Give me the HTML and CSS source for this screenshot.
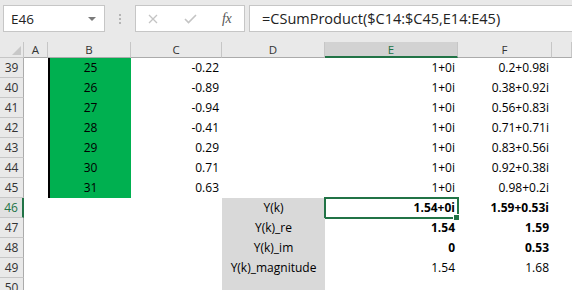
FILE: index.html
```html
<!DOCTYPE html>
<html lang="en">
<head>
    <meta charset="UTF-8">
    <title>Sheet - SumProduct</title>
    <link rel="stylesheet" href="styles.css">
</head>
<body>
    <div class="toolbar">
        <div class="namebox">
            <span>E46</span>
            <svg class="caret" width="8" height="5" viewBox="0 0 8 5"><path d="M0 0 H8 L4 4 Z" fill="#7a7a7a"/></svg>
        </div>
        <div class="grip"><i></i><i></i><i></i></div>
        <div class="fxbox">
            <svg width="10" height="10" viewBox="0 0 10 10"><path d="M1 1 L9 9 M9 1 L1 9" stroke="#c4c4c4" stroke-width="1.3" fill="none"/></svg>
            <svg width="13" height="10" viewBox="0 0 13 10"><path d="M1 5 L4.5 8.5 L12 1" stroke="#c4c4c4" stroke-width="1.6" fill="none"/></svg>
            <span class="fx">fx</span>
        </div>
        <div class="formula">=CSumProduct($C14:$C45,E14:E45)</div>
    </div>

    <div class="sheet">
        <!-- column headers -->
        <div class="corner"><svg width="9" height="9" viewBox="0 0 9 9"><path d="M9 0 V9 H0 Z" fill="#c8c8c8"/></svg></div>
        <div class="colhdr">A</div>
        <div class="colhdr">B</div>
        <div class="colhdr">C</div>
        <div class="colhdr">D</div>
        <div class="colhdr active">E</div>
        <div class="colhdr">F</div>
        <div class="colhdr"></div>

        <div class="rowhdr">39</div><div class="cell"></div><div class="cell green">25</div><div class="cell num">-0.22</div><div class="cell"></div><div class="cell num">1+0i</div><div class="cell num">0.2+0.98i</div><div class="cell"></div>
        <div class="rowhdr">40</div><div class="cell"></div><div class="cell green">26</div><div class="cell num">-0.89</div><div class="cell"></div><div class="cell num">1+0i</div><div class="cell num">0.38+0.92i</div><div class="cell"></div>
        <div class="rowhdr">41</div><div class="cell"></div><div class="cell green">27</div><div class="cell num">-0.94</div><div class="cell"></div><div class="cell num">1+0i</div><div class="cell num">0.56+0.83i</div><div class="cell"></div>
        <div class="rowhdr">42</div><div class="cell"></div><div class="cell green">28</div><div class="cell num">-0.41</div><div class="cell"></div><div class="cell num">1+0i</div><div class="cell num">0.71+0.71i</div><div class="cell"></div>
        <div class="rowhdr">43</div><div class="cell"></div><div class="cell green">29</div><div class="cell num">0.29</div><div class="cell"></div><div class="cell num">1+0i</div><div class="cell num">0.83+0.56i</div><div class="cell"></div>
        <div class="rowhdr">44</div><div class="cell"></div><div class="cell green">30</div><div class="cell num">0.71</div><div class="cell"></div><div class="cell num">1+0i</div><div class="cell num">0.92+0.38i</div><div class="cell"></div>
        <div class="rowhdr">45</div><div class="cell"></div><div class="cell green">31</div><div class="cell num">0.63</div><div class="cell"></div><div class="cell num">1+0i</div><div class="cell num">0.98+0.2i</div><div class="cell"></div>
        <div class="rowhdr active">46</div><div class="cell"></div><div class="cell"></div><div class="cell"></div><div class="cell label">Y(k)</div><div class="cell num bold selected">1.54+0i<span class="handle"></span></div><div class="cell num bold">1.59+0.53i</div><div class="cell"></div>
        <div class="rowhdr">47</div><div class="cell"></div><div class="cell"></div><div class="cell"></div><div class="cell label">Y(k)_re</div><div class="cell num bold">1.54</div><div class="cell num bold">1.59</div><div class="cell"></div>
        <div class="rowhdr">48</div><div class="cell"></div><div class="cell"></div><div class="cell"></div><div class="cell label">Y(k)_im</div><div class="cell num bold">0</div><div class="cell num bold">0.53</div><div class="cell"></div>
        <div class="rowhdr">49</div><div class="cell"></div><div class="cell"></div><div class="cell"></div><div class="cell label">Y(k)_magnitude</div><div class="cell num">1.54</div><div class="cell num">1.68</div><div class="cell"></div>
        <div class="rowhdr">50</div><div class="cell"></div><div class="cell"></div><div class="cell"></div><div class="cell label"></div><div class="cell"></div><div class="cell"></div><div class="cell"></div>
    </div>
</body>
</html>
```

FILE: styles.css
```css
body {
    margin: 0;
    width: 572px;
    height: 290px;
    overflow: hidden;
    background: #ffffff;
    font-family: "Open Sans", "Liberation Sans", sans-serif;
}

/* formula bar */
.toolbar {
    height: 42px;
    background: #e9e9e9;
    display: flex;
    align-items: flex-start;
    padding: 5px 0 0 3px;
    box-sizing: border-box;
}
.namebox {
    width: 102px;
    height: 27px;
    box-sizing: border-box;
    background: white;
    border: 1px solid #c6c6c6;
    display: flex;
    align-items: center;
    justify-content: space-between;
    padding: 0 8px 0 7px;
    font-size: 13.5px;
    color: #222;
}
.caret { margin-top: 1px; }
.grip {
    width: 30px;
    height: 27px;
    display: flex;
    flex-direction: column;
    align-items: center;
    justify-content: center;
    gap: 2px;
}
.grip i {
    width: 2px;
    height: 2px;
    background: #b5b5b5;
}
.fxbox {
    width: 110px;
    height: 27px;
    box-sizing: border-box;
    background: white;
    border: 1px solid #c6c6c6;
    display: flex;
    align-items: center;
    padding: 0 0 0 12px;
}
.fxbox svg:nth-child(2) { margin-left: 26px; }
.fx {
    margin-left: 25px;
    font-family: "Liberation Serif", serif;
    font-style: italic;
    font-size: 14px;
    color: #555;
    letter-spacing: -0.5px;
}
.formula {
    flex: 1;
    height: 27px;
    box-sizing: border-box;
    margin-left: 4px;
    background: white;
    border: 1px solid #c6c6c6;
    border-right: none;
    padding-left: 12px;
    font-size: 14.5px;
    line-height: 25px;
    color: #222;
    white-space: nowrap;
}

/* grid */
.sheet {
    display: grid;
    grid-template-columns: 24px 24px 83px 91px 103px 133px 94px 1fr;
    grid-template-rows: 16px repeat(12, 20px);
}
.corner, .colhdr, .rowhdr {
    background: #e9e9e9;
    box-sizing: border-box;
    color: #333;
    font-size: 11.5px;
}
.corner {
    border-right: 1px solid #c6c6c6;
    border-bottom: 1px solid #c6c6c6;
    display: flex;
    align-items: flex-end;
    justify-content: flex-end;
    padding: 0 2px 2px 0;
}
.colhdr {
    border-right: 1px solid #c6c6c6;
    border-bottom: 1px solid #ababab;
    text-align: center;
    line-height: 15px;
}
.colhdr.active {
    background: #d2d2d2;
    border-bottom: 2px solid #217346;
    color: #217346;
}
.rowhdr {
    border-right: 1px solid #ababab;
    border-bottom: 1px solid #c6c6c6;
    text-align: center;
    line-height: 20px;
    font-size: 12px;
}
.rowhdr.active {
    background: #e1e1e1;
    border-right: 2px solid #217346;
    color: #217346;
}
.cell {
    font-size: 12px;
    line-height: 20px;
    color: #000;
    padding: 0 3px;
    white-space: nowrap;
    position: relative;
}
.num { text-align: right; }
.bold { font-weight: bold; }
.green {
    background: #00b050;
    border-left: 2px solid #000;
    text-align: center;
}
.label {
    background: #d9d9d9;
    text-align: center;
}
.selected::after {
    content: "";
    position: absolute;
    left: -1px;
    top: -1px;
    right: -1px;
    bottom: -1px;
    border: 2px solid #217346;
}
.handle {
    position: absolute;
    right: -2px;
    bottom: -3px;
    width: 5px;
    height: 5px;
    background: #217346;
    border: 1px solid white;
    z-index: 2;
}
```
